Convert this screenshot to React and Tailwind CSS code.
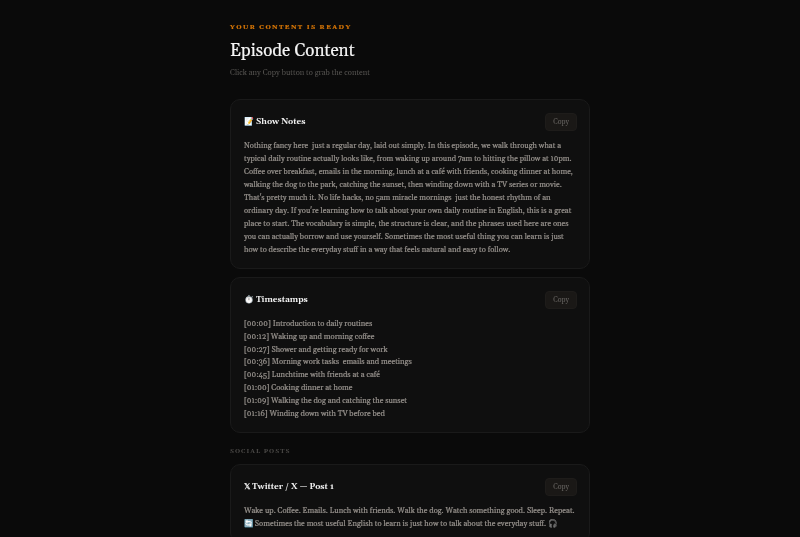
const font = { fontFamily: 'Georgia, Gelasio, "DejaVu Serif", serif' };

function Card({ title, icon, children }) {
  return (
    <div className="rounded-[10px] border border-[#1a1a1a] bg-[#0f0f0f] pt-[13px] pr-[12px] pb-[11px] pl-[13px]">
      <div className="mb-[9px] flex h-[18px] items-center justify-between">
        <div className="flex items-center gap-[2px] text-[8.2px] font-bold text-[#f0f0f0]">
          {icon}
          <span>{title}</span>
        </div>
        <button className="h-[18px] w-[32px] rounded-[4px] border border-[#1e1c1a] bg-[#1a1816] text-[7px] text-[#666360]">Copy</button>
      </div>
      {children}
    </div>
  );
}

const stamps = [
  '[00:00] Introduction to daily routines',
  '[00:12] Waking up and morning coffee',
  '[00:27] Shower and getting ready for work',
  '[00:36] Morning work tasks  emails and meetings',
  '[00:45] Lunchtime with friends at a café',
  '[01:00] Cooking dinner at home',
  '[01:09] Walking the dog and catching the sunset',
  '[01:16] Winding down with TV before bed',
];

export default function App() {
  return (
    <div className="h-[537px] overflow-hidden bg-[#0a0a0a] pl-[230px]" style={font}>
      <div className="flex w-[360px] flex-col pt-[22px] blur-[0.4px]">
        <div className="text-[6.5px] font-bold uppercase leading-[10px] tracking-[1.4px] text-[#d97706] [-webkit-text-stroke:0.2px]">Your content is ready</div>
        <h1 className="mt-[7px] text-[17px] font-normal leading-[24px] text-[#f5f5f5] [-webkit-text-stroke:0.15px]">Episode Content</h1>
        <p className="mt-[4px] text-[7.65px] leading-[12px] text-[#555350]">Click any Copy button to grab the content</p>

        <div className="mt-[20px] flex flex-col gap-[8px]">
          <Card title="Show Notes" icon={<span className="text-[8px]">📝</span>}>
            <p className="whitespace-pre-wrap text-[7.63px] leading-[13px] text-[#96918c] [-webkit-text-stroke:0.2px]">
              Nothing fancy here  just a regular day, laid out simply. In this episode, we walk through what a typical daily routine actually looks like, from waking up around 7am to hitting the pillow at 10pm. Coffee over breakfast, emails in the morning, lunch at a café with friends, cooking dinner at home, walking the dog to the park, catching the sunset, then winding down with a TV series or movie. That's pretty much it. No life hacks, no 5am miracle mornings  just the honest rhythm of an ordinary day. If you're learning how to talk about your own daily routine in English, this is a great place to start. The vocabulary is simple, the structure is clear, and the phrases used here are ones you can actually borrow and use yourself. Sometimes the most useful thing you can learn is just how to describe the everyday stuff in a way that feels natural and easy to follow.
            </p>
          </Card>
          <Card title="Timestamps" icon={<span className="text-[8px]">⏱️</span>}>
            <div className="whitespace-pre-wrap pb-[1px] text-[7.63px] leading-[12.8px] text-[#96918c] [-webkit-text-stroke:0.2px]">
              {stamps.map((s) => <div key={s}>{s}</div>)}
            </div>
          </Card>
        </div>

        <div className="mt-[13px] mb-[8px] text-[6.2px] font-bold uppercase leading-[10px] tracking-[1px] text-[#4c4a48]">Social posts</div>
        <Card title="Twitter / X — Post 1" icon={<span className="text-[8px]">𝕏</span>}>
          <p className="text-[7.63px] leading-[13px] text-[#96918c] [-webkit-text-stroke:0.2px]">
            Wake up. Coffee. Emails. Lunch with friends. Walk the dog. Watch something good. Sleep. Repeat. 🔄 Sometimes the most useful English to learn is just how to talk about the everyday stuff. 🎧
          </p>
        </Card>
      </div>
    </div>
  );
}
